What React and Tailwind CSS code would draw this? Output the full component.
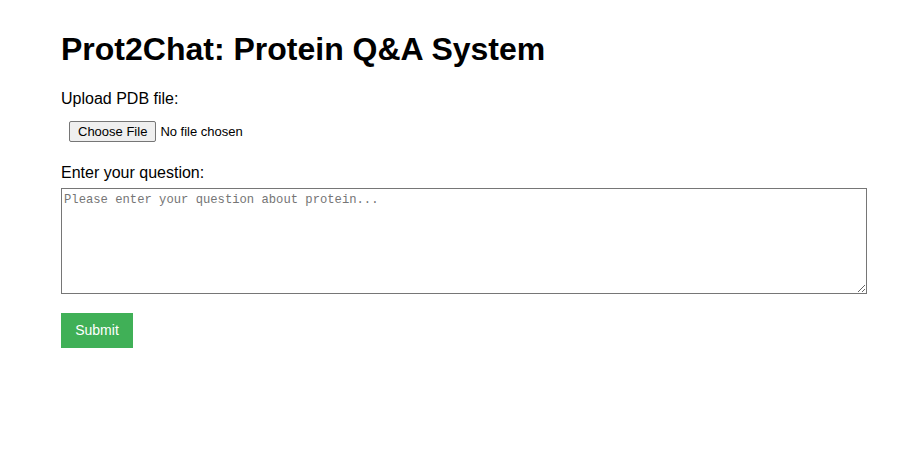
import React, { useState } from "react";

export default function App() {
  const [question, setQuestion] = useState("");

  return (
    <div className="min-h-[458px] bg-white text-black" style={{ fontFamily: '"Liberation Sans", Arial, sans-serif' }}>
      <div className="ml-[61px] w-[806px] pt-[31px]">
        <h1 className="text-[32px] leading-[37px] font-bold">Prot2Chat: Protein Q&amp;A System</h1>

        <form className="mt-[22px]" onSubmit={(e) => e.preventDefault()}>
          <label className="block text-[16px] leading-[18px]">Upload PDB file:</label>
          <div className="mt-[13px] ml-[8px] flex items-center gap-[4px] text-[13px]">
            <label className="h-[21px] px-[8px] flex items-center rounded-[2px] border border-[#767676] bg-[#efefef] text-[13px] leading-none cursor-pointer">
              Choose File
              <input type="file" accept=".pdb" className="hidden" />
            </label>
            <span>No file chosen</span>
          </div>

          <label className="block mt-[22px] text-[16px] leading-[18px]">Enter your question:</label>
          <textarea
            value={question}
            onChange={(e) => setQuestion(e.target.value)}
            placeholder="Please enter your question about protein..."
            className="block mt-[6px] w-[806px] h-[106px] border border-[#767676] px-[2px] pt-[3px] pb-[2px] text-[12.2px] leading-[16px] placeholder:text-[#757575] outline-none"
            style={{ fontFamily: '"Liberation Mono", monospace' }}
          />

          <button
            type="submit"
            className="mt-[19px] w-[72px] h-[35px] bg-[#40B057] text-white text-[14px]"
          >
            Submit
          </button>
        </form>
      </div>
    </div>
  );
}
